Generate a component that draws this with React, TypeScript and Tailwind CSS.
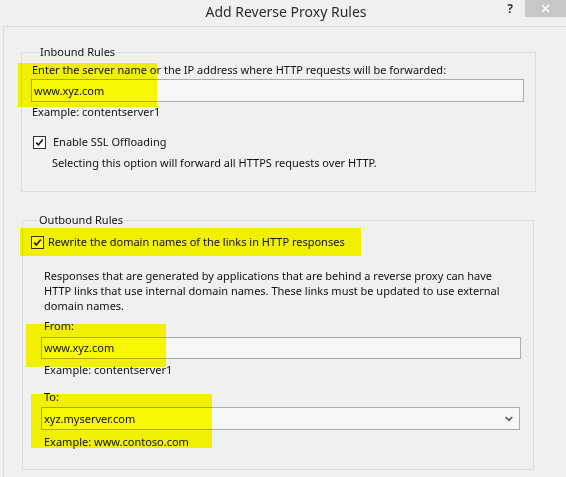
import React from 'react';

// Windows 8 style "Add Reverse Proxy Rules" dialog (IIS URL Rewrite)

const Check: React.FC = () => (
  <span className="flex items-center justify-center w-[13px] h-[13px] border border-[#333] bg-white shrink-0">
    <svg width="9" height="9" viewBox="0 0 9 9">
      <path d="M1.2 4.6 L3.4 6.9 L7.8 1.6" fill="none" stroke="#111" strokeWidth="1.6" />
    </svg>
  </span>
);

const Highlight: React.FC<{ className: string }> = ({ className }) => (
  <div className={`absolute bg-[#ffff00] mix-blend-multiply pointer-events-none ${className}`} />
);

const TextBox: React.FC<{ value: string; className?: string }> = ({ value, className = '' }) => (
  <div className={`flex items-center border border-[#abadb3] bg-[#f7f7f7] pl-[2px] ${className}`}>
    {value}
  </div>
);

export default function App() {
  return (
    <div
      className="relative w-[566px] h-[477px] overflow-hidden bg-[#f0f0f0] text-[11px] leading-4 text-[#111]"
      style={{ fontFamily: '"Noto Sans", "Open Sans", sans-serif' }}
    >
      {/* title bar */}
      <div className="relative flex items-center justify-center h-[26px]">
        <span className="text-[14px] text-[#2b2b2b] -mt-[2px] ml-[6px]">Add Reverse Proxy Rules</span>
        <div className="absolute right-0 top-0 flex items-center h-[17px]">
          <span className="text-[12px] leading-[17px] font-bold text-[#333] mr-[12px]">?</span>
          <div className="flex items-center justify-center w-[41px] h-[17px] bg-[#c7c7c7]">
            <svg width="9" height="9" viewBox="0 0 9 9">
              <path d="M1 1 L8 8 M8 1 L1 8" stroke="#fff" strokeWidth="1.6" />
            </svg>
          </div>
        </div>
      </div>

      {/* content panel */}
      <div className="ml-[3px] h-[451px] border-l border-t border-[#dadada] pt-[17px]">
        {/* inbound */}
        <fieldset className="ml-[17px] w-[515px] h-[148px] border border-[#dcdcdc] pl-[9px] pt-[2px]">
          <legend className="ml-[8px] px-[1px] leading-4">Inbound Rules</legend>
          <div className="pl-[1px]">Enter the server name or the IP address where HTTP requests will be forwarded:</div>
          <TextBox value="www.xyz.com" className="mt-[1px] w-[493px] h-[23px]" />
          <div className="mt-[2px] pl-[1px]">Example: contentserver1</div>
          <div className="mt-[14px] flex items-center gap-[7px] pl-[2px]">
            <Check />
            <span>Enable SSL Offloading</span>
          </div>
          <div className="mt-[5px] pl-[21px]">Selecting this option will forward all HTTPS requests over HTTP.</div>
        </fieldset>

        {/* outbound */}
        <fieldset className="ml-[18px] mt-[20px] w-[512px] h-[258px] border border-[#dcdcdc] pl-[8px] pt-[6px]">
          <legend className="ml-[7px] px-[1px] leading-4">Outbound Rules</legend>
          <div className="flex items-center gap-[4px]">
            <Check />
            <span>Rewrite the domain names of the links in HTTP responses</span>
          </div>
          <div className="pl-[13px]">
            <p className="mt-[18px] leading-[15px] w-[468px]">
              Responses that are generated by applications that are behind a reverse proxy can have HTTP links that
              use internal domain names. These links must be updated to use external domain names.
            </p>
            <div className="mt-[5px]">From:</div>
            <TextBox value="www.xyz.com" className="-ml-[3px] mt-[3px] w-[480px] h-[22px]" />
            <div className="mt-[3px]">Example: contentserver1</div>
            <div className="mt-[11px]">To:</div>
            <div className="-ml-[3px] mt-[2px] w-[479px] h-[23px] flex items-center justify-between border border-[#abadb3] bg-[#f7f7f7] pl-[2px] pr-[6px]">
              <span>xyz.myserver.com</span>
              <svg width="8" height="6" viewBox="0 0 8 6">
                <path d="M0.8 1 L4 4.4 L7.2 1" fill="none" stroke="#555" strokeWidth="1.6" />
              </svg>
            </div>
            <div className="mt-[4px]">Example: www.contoso.com</div>
          </div>
        </fieldset>
      </div>

      {/* yellow marker annotations */}
      <Highlight className="left-[18px] top-[63px] w-[139px] h-[44px]" />
      <Highlight className="left-[20px] top-[228px] w-[341px] h-[28px]" />
      <Highlight className="left-[26px] top-[324px] w-[140px] h-[43px]" />
      <Highlight className="left-[31px] top-[394px] w-[181px] h-[54px]" />
    </div>
  );
}
